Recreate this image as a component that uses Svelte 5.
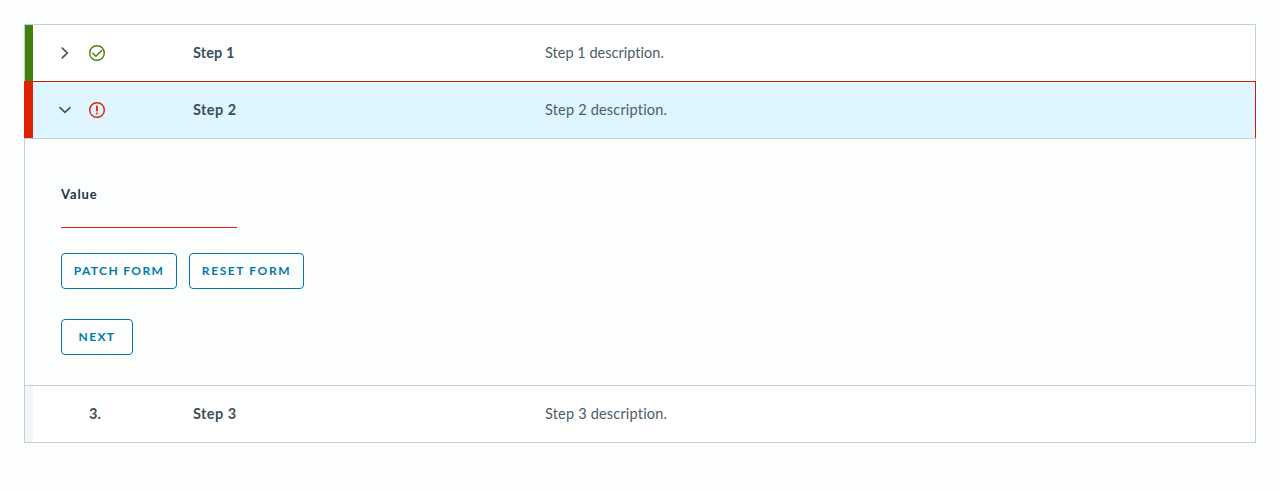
<script>
  const steps = [
    { id: 1, title: 'Step 1', description: 'Step 1 description.', state: 'complete' },
    { id: 2, title: 'Step 2', description: 'Step 2 description.', state: 'error' },
    { id: 3, title: 'Step 3', description: 'Step 3 description.', state: 'inactive' }
  ];
</script>

<main>
  <div class="accordion">
    {#each steps as step}
      <section class={step.state}>
        <div class="header">
          <span class="strip"></span>
          <span class="angle">
            {#if step.state === 'complete'}
              <svg width="16" height="16" viewBox="0 0 16 16"><path d="M5.3 3.1L10.2 8L5.3 12.9" /></svg>
            {:else if step.state === 'error'}
              <svg width="16" height="16" viewBox="0 0 16 16"><path d="M3 5.6L8 10.4L13 5.6" /></svg>
            {/if}
          </span>
          <span class="status">
            {#if step.state === 'complete'}
              <svg width="18" height="18" viewBox="0 0 18 18"><circle cx="9" cy="9" r="7.3" /><path d="M4.700 9.200L7.900 12.200L13.600 6.500" /></svg>
            {:else if step.state === 'error'}
              <svg width="18" height="18" viewBox="0 0 18 18"><circle cx="9" cy="9" r="7.3" /><path class="mark" d="M9 5.500V9.700M9 12.500V12.600" /></svg>
            {:else}
              {step.id}.
            {/if}
          </span>
          <span class="title">{step.title}</span>
          <span class="description">{step.description}</span>
        </div>
        {#if step.state === 'error'}
          <form class="content" onsubmit={(event) => event.preventDefault()}>
            <label for="value">Value</label>
            <input id="value" type="text" />
            <div class="actions">
              <button class="patch" type="button">PATCH FORM</button>
              <button class="reset" type="button">RESET FORM</button>
            </div>
            <button class="next" type="submit">NEXT</button>
          </form>
        {/if}
      </section>
    {/each}
  </div>
</main>

<style>
  :global(body) { margin: 0; background: #fbfefd; }
  main {
    box-sizing: border-box;
    height: 491px;
    padding: 24px;
    background: #fbfefd;
    color: #3c4f59;
    font: 14px/20px Lato, sans-serif;
  }
  .header {
    box-sizing: border-box;
    height: 57px;
    display: grid;
    grid-template-columns: 8px 24px 32px 104px 352px 1fr;
    align-items: center;
    background: #fff;
    border: 1px solid #c6d1d6;
    border-bottom: 0;
  }
  .strip { align-self: stretch; background: #f1f6f9; }
  .complete .strip { background: #42810e; }
  .error .strip { background: #e12200; margin: -1px 0 0 -1px; }
  .error .header {
    background: #dff5ff;
    border-color: #c92100;
    border-left-color: #e12200;
  }
  .inactive .header { height: 58px; border-bottom: 1px solid #c6d1d6; }
  .angle { grid-column: 3; display: flex; }
  svg { fill: none; }
  .angle svg { stroke: #42545e; stroke-width: 1.7; stroke-linecap: round; }
  .status { grid-column: 4; font-weight: 700; font-size: 14.5px; display: flex; }
  .status svg { margin-left: -1px; stroke-width: 1.4; stroke-linecap: round; }
  .complete .status { stroke: #42810e; }
  .error .status { stroke: #e12200; }
  .mark { stroke-width: 1.8; }
  .title { font-weight: 700; font-size: 14.5px; letter-spacing: 0.45px; }
  .complete .title { letter-spacing: 0.1px; }
  .description { font-size: 14.5px; letter-spacing: 0.19px; color: #4b5d67; }
  .complete .description { letter-spacing: 0.02px; }
  .content {
    box-sizing: border-box;
    height: 247px;
    padding: 45px 36px 30px;
    border: 1px solid #c6d1d6;
    border-bottom: 0;
    display: flex;
    flex-direction: column;
    align-items: flex-start;
  }
  label { font-size: 13px; font-weight: 700; line-height: 20px; color: #21333b; letter-spacing: 0.9px; }
  input {
    box-sizing: border-box;
    width: 176px;
    height: 24px;
    padding: 0 6px;
    border: 0;
    border-bottom: 1px solid #e12200;
    background: transparent;
    outline: none;
  }
  .actions { display: flex; gap: 12px; margin: 25px 0 30px; }
  button {
    box-sizing: border-box;
    height: 36px;
    padding: 0;
    border: 1px solid #0079ad;
    border-radius: 4px;
    background: transparent;
    color: #0079ad;
    font: 700 12px/34px Lato, sans-serif;
    letter-spacing: 1.35px;
    text-align: center;
  }
  .patch { width: 116px; }
  .reset { width: 115px; letter-spacing: 1.6px; }
  .next { width: 72px; }
</style>
